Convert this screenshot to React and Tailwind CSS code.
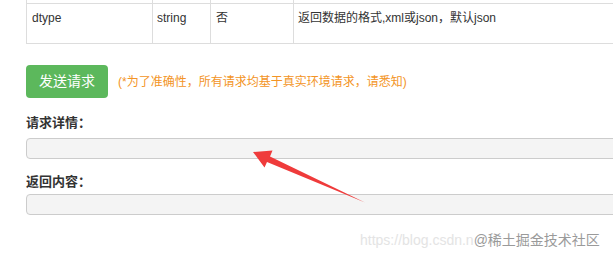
import React from "react";

const font = { fontFamily: '"Liberation Sans", "Noto Sans CJK SC", sans-serif' };

function ParamTable() {
  return (
    <div className="w-[700px] text-[12px] text-[#333]">
      <div className="grid grid-cols-[126px_58px_83px_1fr] h-[3px] border-l border-[#ddd]">
        <div className="border-r border-[#ddd]" />
        <div className="border-r border-[#ddd]" />
        <div className="border-r border-[#ddd]" />
        <div />
      </div>
      <div className="grid grid-cols-[126px_58px_83px_1fr] h-[41px] border border-[#ddd]">
        <div className="border-r border-[#ddd] pl-[5px] pt-[5px]">dtype</div>
        <div className="border-r border-[#ddd] pl-[4px] pt-[5px]">string</div>
        <div className="border-r border-[#ddd] pl-[5px] pt-[5px]">否</div>
        <div className="pl-[4px] pt-[5px]">返回数据的格式,xml或json，默认json</div>
      </div>
    </div>
  );
}

function Arrow() {
  return (
    <svg className="absolute left-0 top-0 pointer-events-none" width="613" height="258">
      <polygon
        points="253,152 272.5,150.5 270,156.5 365,202.5 267,162 264.5,167.5"
        fill="#ef3b3b"
      />
    </svg>
  );
}

export default function App() {
  return (
    <div className="relative w-[613px] h-[258px] overflow-hidden bg-white" style={font}>
      <div className="pl-[26px]">
        <ParamTable />
        <div className="flex items-center gap-[10px] mt-[21px]">
          <button className="w-[82px] h-[33px] rounded-[4px] bg-[#5cb85c] text-white text-[14px]">
            发送请求
          </button>
          <span className="text-[12px] text-[#f39425]">
            (*为了准确性，所有请求均基于真实环境请求，请悉知)
          </span>
        </div>
        <div className="mt-[16px] text-[13px] font-bold text-[#333] leading-[18px]">请求详情：</div>
        <div className="mt-[6px] w-[620px] h-[21px] rounded-[4px] border border-[#ccc] bg-[#f4f4f4]" />
        <div className="mt-[14px] text-[13px] font-bold text-[#333] leading-[18px]">返回内容：</div>
        <div className="mt-[3px] w-[620px] h-[21px] rounded-[4px] border border-[#ccc] bg-[#f4f4f4]" />
      </div>
      <div className="absolute left-[360px] top-[231px] text-[14px] leading-[18px] whitespace-nowrap">
        <span className="text-[#e4e4e4]">https://blog.csdn.n</span>
        <span className="text-[#9a9a9a]">@稀土掘金技术社区</span>
      </div>
      <Arrow />
    </div>
  );
}
